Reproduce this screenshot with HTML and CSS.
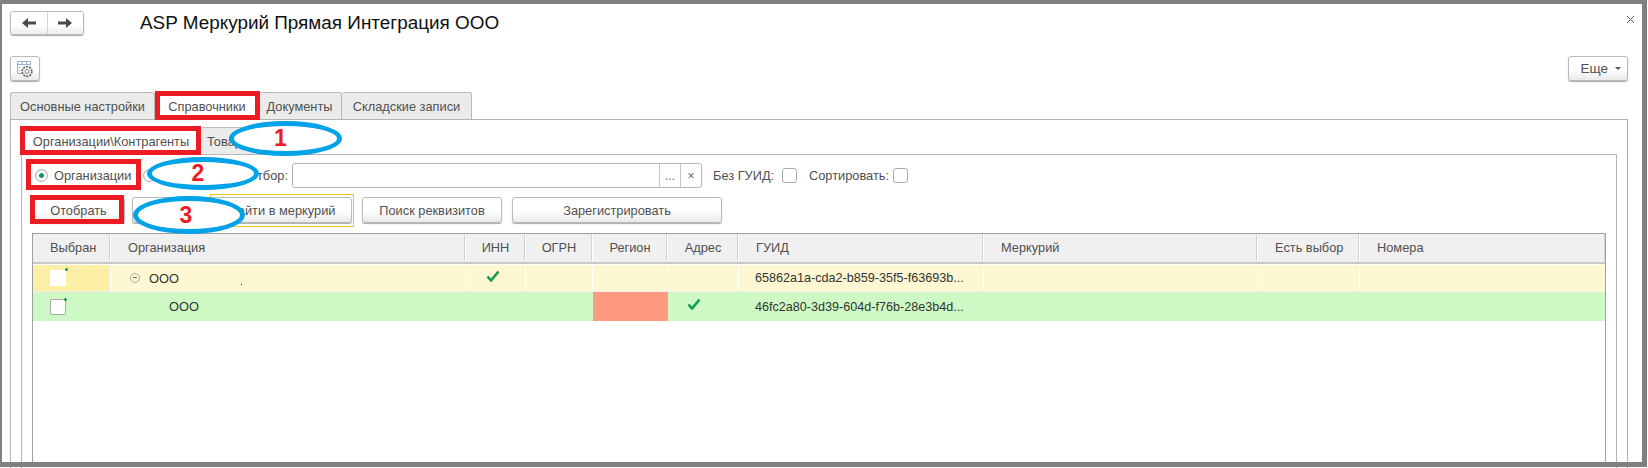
FILE: index.html
```html
<!DOCTYPE html>
<html lang="ru">
<head>
<meta charset="utf-8">
<title>ASP Меркурий Прямая Интеграция ООО</title>
<link rel="stylesheet" href="styles.css">
</head>
<body>
<div class="page">
  <header class="head">
    <div class="nav">
      <button class="nav-btn"><svg width="16" height="12" viewBox="0 0 16 12"><path d="M1 6l6-5v3.5h8v3H7V11z" fill="#4a4a4a"/></svg></button>
      <button class="nav-btn"><svg width="16" height="12" viewBox="0 0 16 12"><path d="M15 6L9 1v3.5H1v3h8V11z" fill="#4a4a4a"/></svg></button>
    </div>
    <h1 class="title">ASP Меркурий Прямая Интеграция ООО</h1>
    <svg class="close" width="9" height="9" viewBox="0 0 9 9"><path d="M1 1l7 7M8 1L1 8" stroke="#555" stroke-width="1" fill="none"/></svg>
  </header>

  <div class="toolbar">
    <button class="btn gear"><svg width="18" height="18" viewBox="0 0 18 18" fill="none"><path d="M6 13.5H1.5V1.5h13v4" stroke="#9db2cc"/><path d="M1.5 4.5h13M6 1.5v3M10.5 1.5v3" stroke="#9db2cc"/><path d="M3.5 7v1M3.5 10v1" stroke="#7f98b8"/><circle cx="11" cy="11.5" r="4.8" stroke="#6b6b6b" stroke-width="1.8" stroke-dasharray="2 1"/><circle cx="11" cy="11.5" r="2" stroke="#808080"/></svg></button>
    <button class="btn more">Еще<span class="caret"></span></button>
  </div>

  <nav class="tabs">
    <div class="tab t1">Основные настройки</div>
    <div class="tab t2 active">Справочники</div>
    <div class="tab t3">Документы</div>
    <div class="tab t4">Складские записи</div>
  </nav>

  <section class="panel">
    <nav class="subtabs">
      <div class="tab s1 active">Организации\Контрагенты</div>
      <div class="tab s2">Товары</div>
    </nav>
    <section class="subpanel">
      <div class="filter">
        <span class="radio on"></span>
        <span class="lbl l-org">Организации</span>
        <span class="radio r2"></span>
        <span class="lbl l-kontr">Контрагенты</span>
        <span class="lbl l-sel">Отбор:</span>
        <div class="input"><span class="input-fill"></span><span class="ibtn">...</span><span class="ibtn">×</span></div>
        <span class="lbl l-guid">Без ГУИД:</span>
        <span class="check c1"></span>
        <span class="lbl l-sort">Сортировать:</span>
        <span class="check c2"></span>
      </div>
      <div class="actions">
        <button class="btn a1">Отобрать</button>
        <div class="focus"><button class="btn a2">Найти в меркурий</button></div>
        <button class="btn a3">Поиск реквизитов</button>
        <button class="btn a4">Зарегистрировать</button>
      </div>
      <div class="table">
        <div class="row hdr">
          <div class="cell">Выбран</div>
          <div class="cell pl">Организация</div>
          <div class="cell ctr">ИНН</div>
          <div class="cell ctr">ОГРН</div>
          <div class="cell ctr">Регион</div>
          <div class="cell ctr">Адрес</div>
          <div class="cell pg">ГУИД</div>
          <div class="cell pm">Меркурий</div>
          <div class="cell pe">Есть выбор</div>
          <div class="cell pe">Номера</div>
        </div>
        <div class="row yellow">
          <div class="cell sel"><span class="mini bare"></span></div>
          <div class="cell org"><span class="minus"></span>ООО<span class="dot"></span></div>
          <div class="cell mid t-inn"><svg class="tick" width="14" height="12" viewBox="0 0 14 12"><path d="M1.5 6.5L5 10.5 12.5 1.5" stroke="#149a54" stroke-width="2.6" fill="none"/></svg></div>
          <div class="cell"></div>
          <div class="cell"></div>
          <div class="cell"></div>
          <div class="cell guid">65862a1a-cda2-b859-35f5-f63693b...</div>
          <div class="cell"></div>
          <div class="cell"></div>
          <div class="cell"></div>
        </div>
        <div class="row green">
          <div class="cell sel"><span class="mini"></span></div>
          <div class="cell org2">ООО</div>
          <div class="cell"></div>
          <div class="cell"></div>
          <div class="cell red"></div>
          <div class="cell mid t-adr"><svg class="tick" width="14" height="12" viewBox="0 0 14 12"><path d="M1.5 6.5L5 10.5 12.5 1.5" stroke="#149a54" stroke-width="2.6" fill="none"/></svg></div>
          <div class="cell guid">46fc2a80-3d39-604d-f76b-28e3b4d...</div>
          <div class="cell"></div>
          <div class="cell"></div>
          <div class="cell"></div>
        </div>
      </div>
    </section>
  </section>
</div>

<div class="mark m-tab"></div>
<div class="mark m-sub"></div>
<div class="mark m-radio"></div>
<div class="mark m-btn"></div>
<div class="oval o1">1</div>
<div class="oval o2">2</div>
<div class="oval o3">3</div>
<div class="frame"></div>
</body>
</html>
```

FILE: styles.css
```css
* { box-sizing: border-box; }
html, body { margin: 0; height: 468px; overflow: hidden; background: #fff; }
body { position: relative; font: 12.8px "Liberation Sans", Arial, sans-serif; color: #505050; }
button { font: inherit; color: inherit; padding: 0; margin: 0; }

.frame { position: absolute; left: 0; top: 0; width: 1647px; height: 467px; border: solid #808080; border-width: 4px 5px 5px 2px; pointer-events: none; }

.page { padding: 11px 20px 0 10px; height: 468px; }

.head { display: flex; align-items: center; height: 24px; margin-right: -10px; }
.nav { display: flex; width: 74px; height: 24px; border: 1px solid #b9b9b9; border-radius: 3px; box-shadow: 0 1px 1px #aaa; overflow: hidden; }
.nav-btn { flex: 1; border: 0; background: linear-gradient(#fff 60%, #ececec); display: flex; align-items: center; justify-content: center; }
.nav-btn + .nav-btn { border-left: 1px solid #d4d4d4; }
.title { margin: 0 0 0 56px; font: 400 18.9px "Liberation Sans", Arial, sans-serif; color: #111; }
.close { margin-left: auto; margin-right: 3px; margin-top: -8px; }

.toolbar { display: flex; justify-content: space-between; margin-top: 21px; height: 26px; }
.btn { border: 1px solid #b9b9b9; border-radius: 3px; background: linear-gradient(#fff 55%, #e9e9e9); box-shadow: 0 1px 1px #aaa; }
.gear { width: 30px; height: 25px; display: flex; align-items: center; justify-content: center; }
.more { width: 60px; height: 25px; font-size: 13.5px; display: flex; align-items: center; justify-content: flex-end; padding-right: 6px; }
.caret { width: 0; height: 0; margin-left: 7px; border: 3px solid transparent; border-top: 3px solid #555; border-bottom: 0; }

.tabs { display: flex; margin-top: 10px; height: 27px; }
.tab { height: 100%; display: flex; align-items: center; justify-content: center; background: #ebebeb; border: 1px solid #b9b9b9; border-bottom: 0; border-left-width: 0; border-radius: 3px 3px 0 0; white-space: nowrap; }
.tab.active { background: #fff; }
.t1 { width: 145px; border-left-width: 1px; }
.t2 { width: 105px; }
.t3 { width: 82px; padding-right: 2px; }
.t4 { width: 130px; }

.panel { border: 1px solid #b4b4b4; border-bottom: 0; padding: 7px 10px 0; height: 349px; }
.subtabs { display: flex; height: 27px; }
.s1 { width: 180px; border-left-width: 1px; }
.s2 { width: 62px; justify-content: flex-start; padding-left: 6px; }

.subpanel { border: 1px solid #b4b4b4; border-bottom: 0; padding: 8px 10px 0; height: 314px; }

.filter { display: flex; align-items: center; height: 25px; }
.radio { width: 13px; height: 13px; flex: none; border: 1px solid #aaa; border-radius: 50%; background: #fff; display: flex; align-items: center; justify-content: center; box-shadow: inset 0 1px 1px #ddd; }
.radio.on { margin-left: 3px; }
.radio.on::after { content: ""; width: 5px; height: 5px; border-radius: 50%; background: #149a54; }
.lbl { white-space: nowrap; }
.l-org { margin-left: 6px; width: 79px; }
.r2 { margin-left: 10px; }
.l-kontr { margin-left: 7px; width: 69px; font-size: 11px; }
.l-sel { margin-left: 15px; width: 39px; }
.input { margin-left: 6px; width: 410px; height: 25px; display: flex; border: 1px solid #b4b4b4; border-radius: 3px; background: #fff; }
.input-fill { flex: 1; }
.ibtn { width: 21px; border-left: 1px solid #c4c4c4; display: flex; align-items: center; justify-content: center; font-size: 12px; color: #666; }
.l-guid { margin-left: 11px; width: 69px; }
.check { width: 15px; height: 15px; flex: none; border: 1px solid #aaa; border-radius: 3px; background: #fff; }
.l-sort { margin-left: 12px; width: 84px; }

.actions { display: flex; align-items: center; margin-top: 9px; height: 26px; }
.actions .btn { height: 26px; }
.a1 { width: 93px; }
.focus { margin-left: 7px; width: 222px; height: 33px; display: flex; align-items: center; justify-content: flex-start; position: relative; flex: none; }
.focus::after { content: ""; position: absolute; left: 78px; right: 0; top: 0; bottom: 0; border: 1px solid #f5c518; pointer-events: none; }
.a2 { width: 220px; padding-left: 80px; }
.a3 { margin-left: 8px; width: 140px; }
.a4 { margin-left: 10px; width: 210px; }

.table { margin-top: 10px; height: 234px; border: 1px solid #a0a0a0; border-bottom: 0; }
.row { display: grid; grid-template-columns: 78px 355px 60px 67px 75px 71px 245px 274px 102px 1fr; align-items: stretch; }
.cell { display: flex; align-items: center; white-space: nowrap; border-right: 1px solid #fff; }
.cell:last-child { border-right: 0; }
.hdr { height: 30px; border-bottom: 2px solid #c8c8c8; background: #f0f0f0; padding-bottom: 1px; }
.hdr .cell { padding-left: 17px; box-shadow: inset -1px 0 0 #d2d2d2; }
.hdr .ctr { justify-content: center; padding-left: 0; }

.yellow { height: 27px; margin-top: 1px; background: #fdf7d2; border-bottom: 1px solid #f0f0e8; color: #333; }
.yellow .cell.sel { background: #fdf0a6; }
.green { height: 29px; background: #cef9c4; color: #333; }
.green .cell { border-right: 0; }
.cell.red { background: #ff9a82; }
.sel { padding-left: 17px; }
.mini { width: 16px; height: 16px; position: relative; background: #fff; border: 1px solid #a8a8a8; border-radius: 2px; }
.mini.bare { border: 0; border-radius: 0; }
.mini::after { content: ""; position: absolute; right: -2px; top: -2px; width: 3px; height: 3px; background: #149a54; border-radius: 50%; }
.org { padding-left: 19px; position: relative; }
.minus { width: 10px; height: 10px; margin-right: 9px; border: 1px solid #aaa; border-radius: 50%; position: relative; }
.minus::after { content: ""; position: absolute; left: 2px; right: 2px; top: 3px; height: 1px; background: #777; }
.dot { position: absolute; left: 130px; top: 19px; width: 1px; height: 1px; background: #222; }
.org2 { padding-left: 58px; }
.mid { justify-content: center; padding-bottom: 5px; }
.t-inn { padding-right: 5px; }
.t-adr { padding-right: 20px; }
.guid { padding-left: 16px; font-size: 12.6px; }

.mark { position: absolute; border: 5px solid #ed1c24; pointer-events: none; }
.m-tab { left: 155px; top: 91px; width: 105px; height: 29px; }
.m-sub { left: 20px; top: 126px; width: 181px; height: 29px; }
.m-radio { left: 26px; top: 159px; width: 115px; height: 31px; }
.m-btn { left: 30px; top: 195px; width: 94px; height: 29px; }

.oval { position: absolute; border: 5px solid #00a2e8; border-radius: 50%; background: #fff; display: flex; align-items: center; justify-content: center; padding-right: 10px; font: 700 23px "Liberation Sans", Arial, sans-serif; color: #ed1c24; }
.o1 { left: 229px; top: 121px; width: 113px; height: 35px; }
.o2 { left: 147px; top: 157px; width: 112px; height: 33px; }
.o3 { left: 133px; top: 196px; width: 112px; height: 38px; padding-right: 6px; }
```
